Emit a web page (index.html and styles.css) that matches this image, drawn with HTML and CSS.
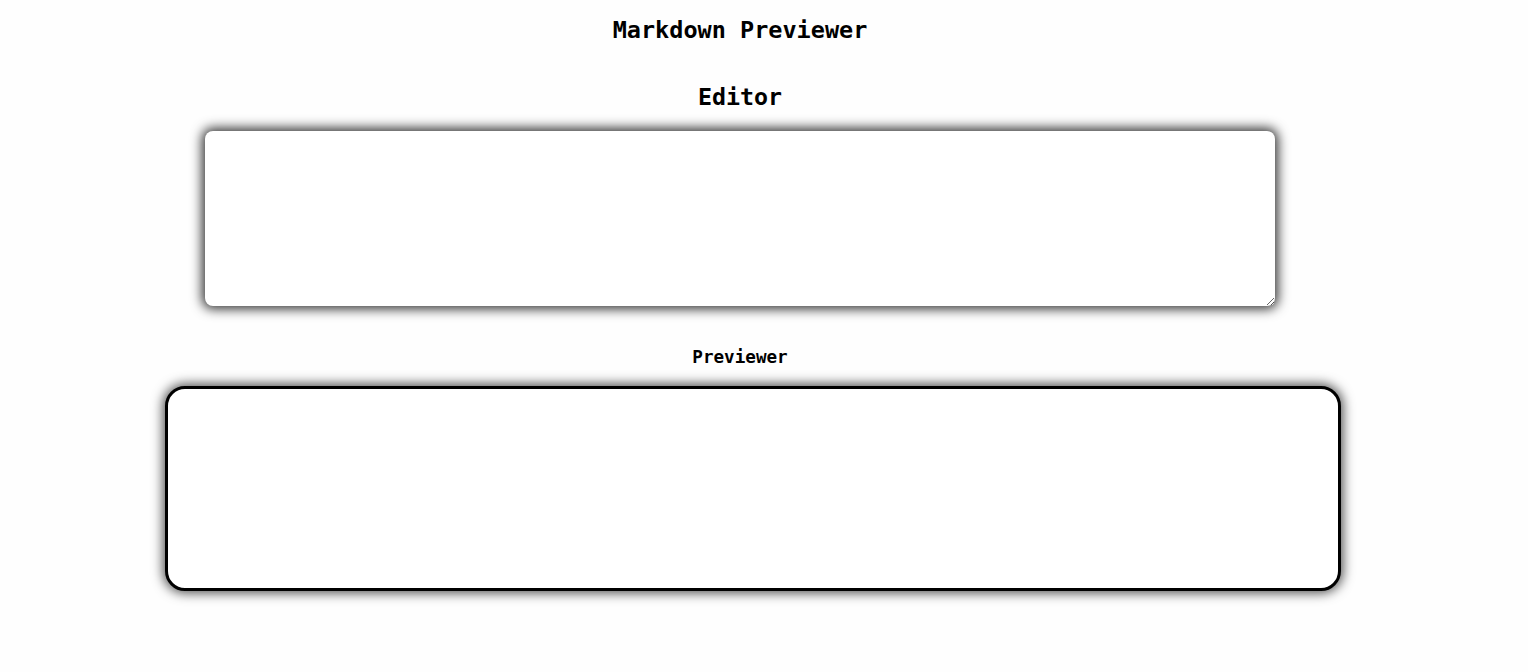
FILE: index.html
```html
<!DOCTYPE html>
<html lang="en">
<head>
<meta charset="utf-8">
<title>Markdown Previewer</title>
<link rel="stylesheet" href="styles.css">
</head>
<body>
<div class="app">
  <h1 class="title">Markdown Previewer</h1>
  <h2 class="section-title">Editor</h2>
  <textarea class="editor" id="editor"></textarea>
  <h3 class="preview-title">Previewer</h3>
  <div class="preview" id="preview"></div>
</div>
</body>
</html>
```
FILE: styles.css
```css
html, body {
  margin: 0;
  padding: 0;
  background: #fefefe;
}
body {
  font-family: "DejaVu Sans Mono", "Liberation Mono", monospace;
  color: #000;
  min-height: 672px;
}
.app {
  width: 1480px;
  display: flex;
  flex-direction: column;
  align-items: center;
  padding-bottom: 60px;
}
.title {
  margin: 16px 0 0;
  font-size: 23.5px;
  line-height: 28px;
  font-weight: bold;
}
.section-title {
  margin: 39px 0 0;
  font-size: 23.3px;
  line-height: 28px;
  font-weight: bold;
}
.editor {
  box-sizing: border-box;
  margin: 20px 0 0;
  width: 1070px;
  height: 175px;
  border: none;
  border-radius: 8px;
  background: #fff;
  box-shadow: 0 0 12px 3px rgba(0,0,0,0.8);
  outline: none;
  padding: 4px;
}
.preview-title {
  margin: 40px 0 0;
  font-size: 17.6px;
  line-height: 22px;
  font-weight: bold;
}
.preview {
  box-sizing: border-box;
  align-self: flex-start;
  margin: 18px 0 0 165px;
  width: 1176px;
  height: 205px;
  border: 3px solid #000;
  border-radius: 20px;
  background: #fff;
  box-shadow: 0 0 12px 2px rgba(0,0,0,0.7);
}
```
